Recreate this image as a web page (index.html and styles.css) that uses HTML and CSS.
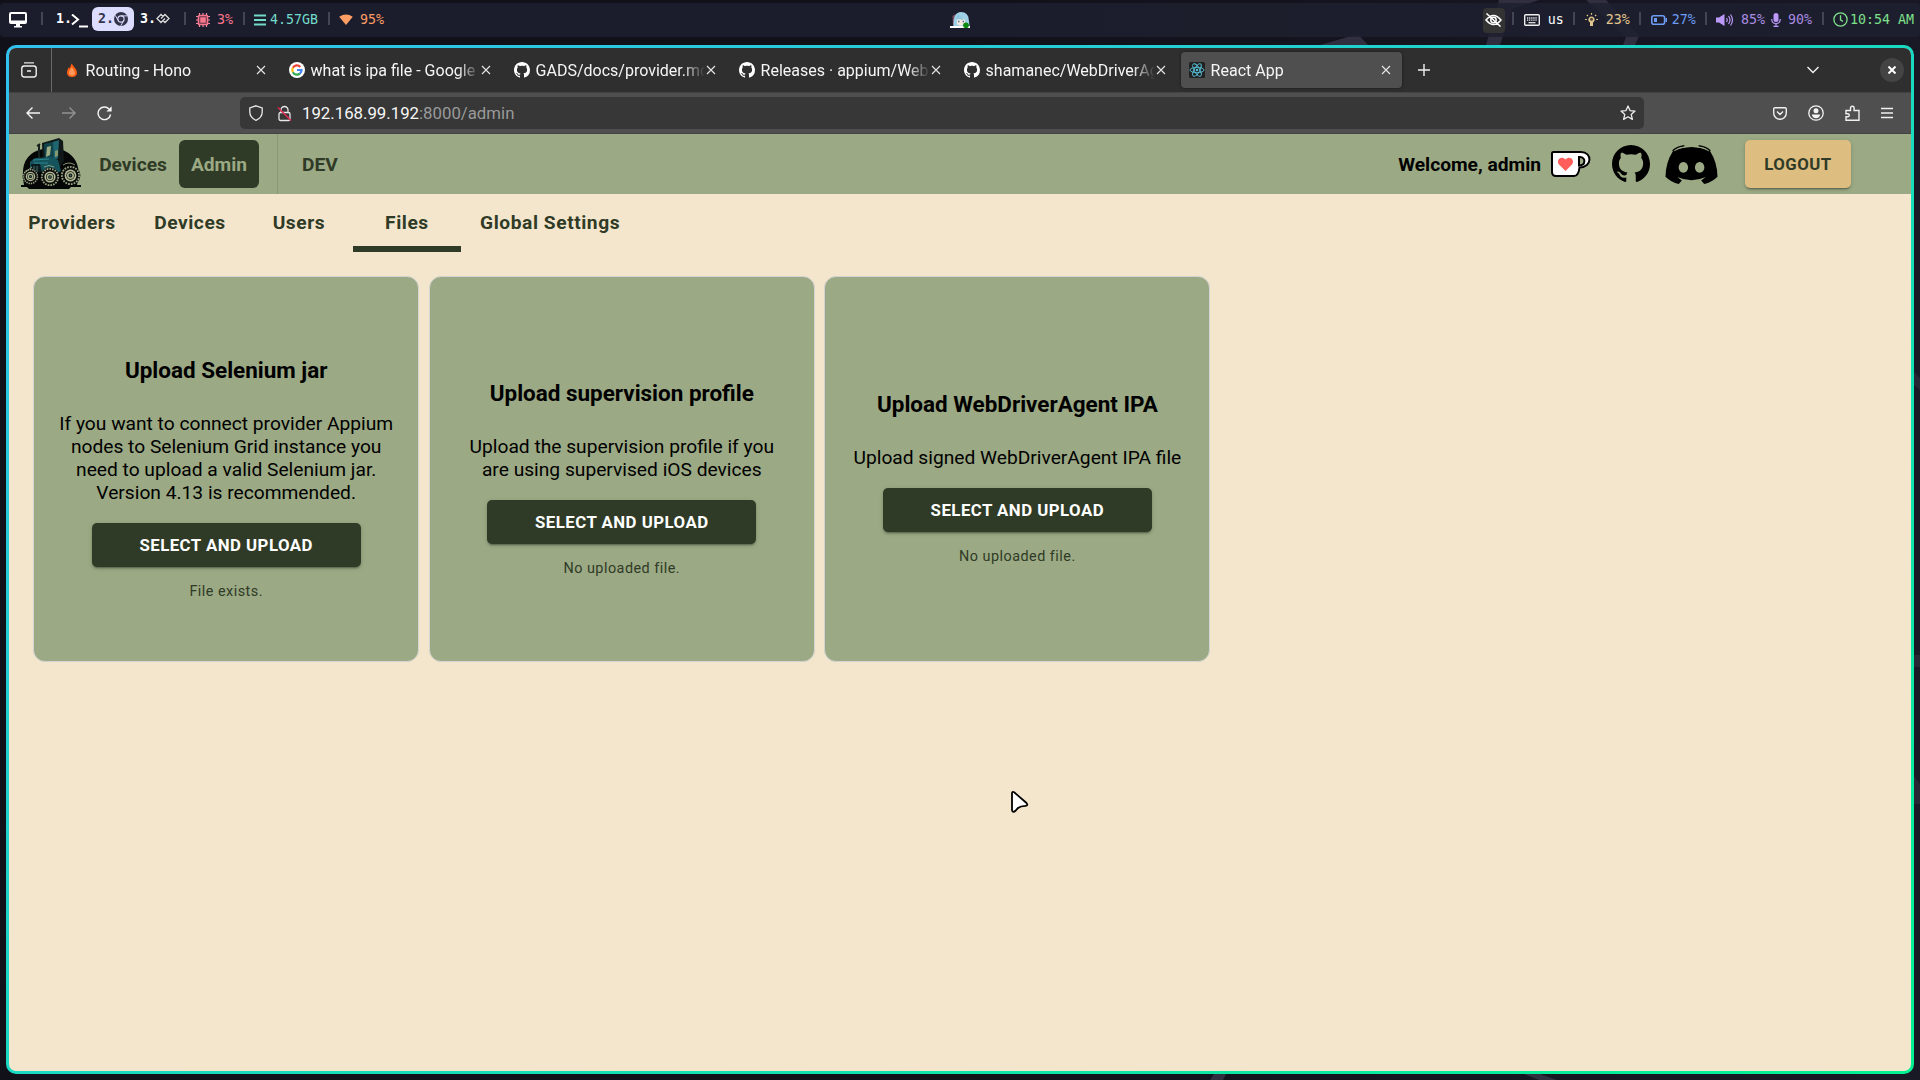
FILE: index.html
```html
<!DOCTYPE html>
<html lang="en">
<head>
<meta charset="utf-8">
<title>React App</title>
<link rel="stylesheet" href="styles.css">
</head>
<body>
<svg class="wallpaper" viewBox="0 0 1920 1080" aria-hidden="true">
  <g fill="#302f40">
    <path d="M1320 45l38-11 10 11z"/>
    <path d="M1499 0h40l-27 9-12 36h-14z"/>
    <path d="M1586 0h20l33 36-4 9h-12l3-8z"/>
    <path d="M1210 1080l4-6h12l-3 6zM1524 1074h16l17 6h-18z"/>
    <path d="M1914 372l6 6v12l-6-5zM1914 655h6v12h-6zM1914 776l6 8v20h-6z" opacity=".6"/>
  </g>
</svg>

<svg class="defs" aria-hidden="true">
  <symbol id="github" viewBox="0 0 16 16"><path d="M8 0C3.58 0 0 3.58 0 8c0 3.54 2.29 6.53 5.47 7.59.4.07.55-.17.55-.38 0-.19-.01-.82-.01-1.49-2.01.37-2.53-.49-2.69-.94-.09-.23-.48-.94-.82-1.13-.28-.15-.68-.52-.01-.53.63-.01 1.08.58 1.23.82.72 1.21 1.87.87 2.33.66.07-.52.28-.87.51-1.07-1.78-.2-3.64-.89-3.64-3.95 0-.87.31-1.59.82-2.15-.08-.2-.36-1.02.08-2.12 0 0 .67-.21 2.2.82.64-.18 1.32-.27 2-.27s1.36.09 2 .27c1.53-1.04 2.2-.82 2.2-.82.44 1.1.16 1.92.08 2.12.51.56.82 1.27.82 2.15 0 3.07-1.87 3.75-3.65 3.95.29.25.54.73.54 1.48 0 1.07-.01 1.93-.01 2.2 0 .21.15.46.55.38A8.01 8.01 0 0 0 16 8c0-4.42-3.58-8-8-8z"/></symbol>
  <symbol id="close" viewBox="0 0 10 10"><path d="M1 1l8 8M9 1l-8 8" fill="none" stroke="#e6e6e6" stroke-width="1.1"/></symbol>
  <symbol id="wheel" viewBox="-10 -10 20 20"><circle r="9.4" fill="#0b0d0a"/><circle r="8.2" fill="none" stroke="#98a386" stroke-width="1.8" stroke-dasharray="1.6 1.1"/><circle r="5.6" fill="#b4ba98"/><circle r="4" fill="#11160f"/><circle r="2.6" fill="none" stroke="#a7b18e" stroke-width="1.5"/><circle r="1" fill="#466"/></symbol>
</svg>

<header class="bar">
  <div class="bar-side">
    <svg class="i-monitor" width="18" height="16" viewBox="0 0 18 16"><path fill="#fff" fill-rule="evenodd" d="M2 0h14a2 2 0 0 1 2 2v8a2 2 0 0 1-2 2h-5v2h2v1.500H5V14h2v-2H2a2 2 0 0 1-2-2V2a2 2 0 0 1 2-2zm0 2v6.500h14V2z"/></svg>
    <i class="sep s1"></i>
    <span class="ws w1">1.<svg width="18" height="14" viewBox="0 0 18 14"><path d="M1 .5l6 5-6 5M8 12.500h9" fill="none" stroke="#fff" stroke-width="2"/></svg></span>
    <span class="ws active">2.<svg width="14" height="14" viewBox="0 0 14 14"><circle cx="7" cy="7" r="7" fill="#33334a"/><circle cx="7" cy="7" r="3.100" fill="none" stroke="#dcdcff" stroke-width="1.100"/><path d="M7 3.900h6M4.300 8.600L1.300 3.400M9.700 8.600l-3 5.200" stroke="#dcdcff" stroke-width="1"/></svg></span>
    <span class="ws w3">3.<svg width="14" height="12" viewBox="0 0 14 12"><path d="M7 3.500L5 1.500 1 5.500l4 4 4-4M7 7.500l2 2 4-4-4-4-4 4" fill="none" stroke="#ddd" stroke-width="1.300"/></svg></span>
    <i class="sep s2"></i>
    <span class="stat cpu"><svg width="14" height="14" viewBox="0 0 14 14"><path d="M3.500 0v14M7 0v14M10.500 0v14M0 3.500h14M0 7h14M0 10.500h14" stroke="#f38ba8" stroke-width="1.200"/><rect x="1.700" y="1.700" width="10.600" height="10.600" rx="1.500" fill="#f7768e"/><rect x="3.800" y="3.800" width="6.400" height="6.400" fill="#f7768e" stroke="#3a2233" stroke-width=".8"/></svg>3%</span>
    <i class="sep s3"></i>
    <span class="stat mem"><svg width="12" height="12" viewBox="0 0 12 12"><path d="M0 1.500h12M0 6h12M0 10.500h12" stroke="#73daca" stroke-width="2"/></svg>4.57GB</span>
    <i class="sep s3"></i>
    <span class="stat wifi"><svg width="14" height="11" viewBox="0 0 14 11"><path d="M.2 2.800Q7-2 13.800 2.800L7 11z" fill="#ff9e64"/></svg>95%</span>
  </div>
  <svg class="avatar" width="20" height="16" viewBox="0 0 20 16">
    <path d="M0 14h20v2H0z" fill="#fff"/><path d="M3 14L2.500 4l3-2 .5 12zM16 14l2.500-10-3-2z" fill="#7d4b62"/>
    <path d="M3.500 14Q3 0 11 0q7.500 0 8 9l.5 5z" fill="#9fd0e6"/><path d="M7 8q4-5 8 0v4q-4 3-8 0z" fill="#f6e6df"/><path d="M8 9.500h1.500M12.500 9.500H14" stroke="#467a98" stroke-width="1.500"/><path d="M6 7q1-4 3-5l1 5 1-4 2 4 2 1" fill="#8ec6dd"/>
    <circle cx="16" cy="13.300" r="2.900" fill="#0a8a10"/>
  </svg>
  <div class="bar-side right">
    <span class="eye"><svg width="17" height="14" viewBox="0 0 17 14"><path d="M1 7q7.500-9 15 0-7.500 9-15 0zM1.500.5l14 13" fill="none" stroke="#fff" stroke-width="1.500"/><circle cx="8.500" cy="7" r="2.700" fill="none" stroke="#fff" stroke-width="1.500"/></svg></span>
    <i class="sep r1"></i>
    <span class="stat kb"><svg width="16" height="12" viewBox="0 0 16 12"><rect x=".7" y=".7" width="14.600" height="10.600" rx="1" fill="none" stroke="#eee" stroke-width="1.400"/><path d="M3 4h10M3 6.200h10" stroke="#eee" stroke-width="1.300" stroke-dasharray="1.300 .8"/><path d="M4.500 8.700h7" stroke="#eee" stroke-width="1.200"/></svg>us</span>
    <i class="sep r2"></i>
    <span class="stat sun"><svg width="13" height="13" viewBox="0 0 13 13"><path d="M6.500 0v1.800M1.800 1.800L3 3M11.200 1.800L10 3M0 6.500h1.800M11.200 6.500H13" stroke="#e0c58c" stroke-width="1.200"/><path d="M5 9.500a3.200 3.200 0 1 1 3 0V13H5z" fill="#e0c58c"/><circle cx="6.500" cy="6.300" r="1.500" fill="#4b4638"/></svg>23%</span>
    <i class="sep r3"></i>
    <span class="stat bat"><svg width="16" height="10" viewBox="0 0 16 10"><rect x=".8" y=".8" width="12.800" height="8.400" rx="2" fill="none" stroke="#6c9cf5" stroke-width="1.600"/><path d="M3 3h3v4H3zM14.500 3H16v4h-1.500z" fill="#6c9cf5"/></svg>27%</span>
    <i class="sep r4"></i>
    <span class="stat vol"><svg width="18" height="14" viewBox="0 0 18 14"><path d="M0 4.500h3L8.500 1v12L3 9.500H0z" fill="#bb9af7"/><path d="M10.500 5q1.500 2 0 4M12.500 3q3 4 0 8M14.500 1.500q4 5.500 0 11" fill="none" stroke="#bb9af7" stroke-width="1.200"/></svg>85%</span>
    <span class="stat mic"><svg width="10" height="14" viewBox="0 0 10 14"><rect x="2.500" width="5" height="9" rx="2.500" fill="#bb9af7"/><path d="M.7 6q0 4.500 4.300 4.500T9.300 6M5 10.500v2.800M2.500 13.300h5" fill="none" stroke="#bb9af7" stroke-width="1.200"/></svg>90%</span>
    <i class="sep r5"></i>
    <span class="stat time"><svg width="15" height="15" viewBox="0 0 15 15"><circle cx="7.500" cy="7.500" r="6.600" fill="none" stroke="#7fe08a" stroke-width="1.300"/><path d="M7.500 3.300v4.500l2.500 1.700" fill="none" stroke="#7fe08a" stroke-width="1.300"/></svg>10:54 AM</span>
  </div>
</header>

<main class="window">
 <div class="window-body">
  <div class="tabstrip">
    <div class="recent"><svg width="16" height="16" viewBox="0 0 16 16"><path d="M3 .8h10" stroke="#e4e4e4" stroke-width="1.300"/><path d="M.8 6.500a2.500 2.500 0 0 1 2.500-2.500h9.400a2.500 2.500 0 0 1 2.500 2.500v6.200a2.300 2.300 0 0 1-2.300 2.300H3.100a2.300 2.300 0 0 1-2.300-2.300zM6 9h4" fill="none" stroke="#f0f0f0" stroke-width="1.400"/></svg></div>
    <div class="tab"><svg width="16" height="16" viewBox="0 0 16 16"><path d="M7.500 1.500C11 6 13 8 13 11c0 2.500-2.300 4-5 4s-5-1.500-5-4.300C3 8.500 4 7 4.800 5.200l1 1.200z" fill="#ff5b11"/><path d="M7.800 5C10 8 11 9.300 11 11s-1.300 2.700-3 2.700S4.900 12.600 4.900 11C4.900 9 6.300 7.500 7.800 5z" fill="#ff9758"/></svg><span>Routing - Hono</span><svg class="x"><use href="#close"/></svg></div>
    <div class="tab"><svg width="16" height="16" viewBox="0 0 16 16"><circle cx="8" cy="8" r="8" fill="#fff"/><g fill="none" stroke-width="2.200"><path d="M11.300 4.900A4.600 4.600 0 0 0 3.900 5.800" stroke="#ea4335"/><path d="M3.900 5.800a4.600 4.600 0 0 0 0 4.400" stroke="#fbbc05"/><path d="M3.900 10.200a4.600 4.600 0 0 0 7 1.400" stroke="#34a853"/><path d="M10.900 11.600A4.500 4.500 0 0 0 12.500 8H8" stroke="#4285f4"/></g></svg><span>what is ipa file - Google</span><svg class="x"><use href="#close"/></svg></div>
    <div class="tab"><svg width="16" height="16" fill="#fff"><use href="#github"/></svg><span>GADS/docs/provider.md</span><svg class="x"><use href="#close"/></svg></div>
    <div class="tab"><svg width="16" height="16" fill="#fff"><use href="#github"/></svg><span>Releases · appium/WebD</span><svg class="x"><use href="#close"/></svg></div>
    <div class="tab"><svg width="16" height="16" fill="#fff"><use href="#github"/></svg><span>shamanec/WebDriverAg</span><svg class="x"><use href="#close"/></svg></div>
    <div class="tab current"><svg width="16" height="16" viewBox="0 0 16 16"><rect width="16" height="16" rx="1.500" fill="#222"/><g fill="none" stroke="#58c4dc" stroke-width=".9"><ellipse cx="8" cy="8" rx="7" ry="2.700"/><ellipse cx="8" cy="8" rx="7" ry="2.700" transform="rotate(60 8 8)"/><ellipse cx="8" cy="8" rx="7" ry="2.700" transform="rotate(120 8 8)"/></g><circle cx="8" cy="8" r="1.200" fill="#58c4dc"/></svg><span>React App</span><svg class="x"><use href="#close"/></svg></div>
    <svg class="plus" width="12" height="12" viewBox="0 0 12 12"><path d="M6 0v12M0 6h12" stroke="#f2f2f2" stroke-width="1.400"/></svg>
    <svg class="chevron" width="12" height="8" viewBox="0 0 12 8"><path d="M.5 1L6 6.500 11.500 1" fill="none" stroke="#f2f2f2" stroke-width="1.400"/></svg>
    <div class="win-close"><svg width="8" height="8" viewBox="0 0 8 8"><path d="M.5.5l7 7M7.500.5l-7 7" stroke="#fff" stroke-width="2"/></svg></div>
  </div>

  <div class="toolbar">
    <svg class="back" width="14" height="12" viewBox="0 0 14 12"><path d="M6.500.5L1 6l5.500 5.500M1 6h13" fill="none" stroke="#f5f5f5" stroke-width="1.400"/></svg>
    <svg class="fwd" width="14" height="12" viewBox="0 0 14 12"><path d="M7.500.5L13 6l-5.500 5.500M13 6H0" fill="none" stroke="#929292" stroke-width="1.400"/></svg>
    <svg class="reload" width="15" height="15" viewBox="0 0 15 15"><path d="M12 3A6.300 6.300 0 1 0 13.600 8.500" fill="none" stroke="#f5f5f5" stroke-width="1.400"/><path d="M14.600.3v5.200H9.400z" fill="#f5f5f5"/></svg>
    <div class="urlbar">
      <svg width="14" height="16" viewBox="0 0 14 16"><path d="M7 .8L13.200 3v4c0 4-2.300 6.600-6.200 8.300C3.100 13.600.8 11 .8 7V3z" fill="none" stroke="#e8e8e8" stroke-width="1.300"/></svg>
      <svg class="lock" width="15" height="17" viewBox="0 0 15 17"><path d="M4 7.500V5a3.500 3.500 0 0 1 7 0v2.500M2 9a1.500 1.500 0 0 1 1.500-1.500h8A1.500 1.500 0 0 1 13 9v5a1.500 1.500 0 0 1-1.500 1.500h-8A1.500 1.500 0 0 1 2 14z" fill="none" stroke="#e8e8e8" stroke-width="1.300"/><path d="M1 2.500l13 13" stroke="#e22850" stroke-width="1.500"/></svg>
      <span class="url">192.168.99.192<em>:8000/admin</em></span>
      <svg class="star" width="16" height="16" viewBox="0 0 16 16"><path d="M8 1l2 4.600 5 .5-3.800 3.300 1.200 5L8 11.800 3.600 14.400l1.200-5L1 6.100l5-.5z" fill="none" stroke="#eee" stroke-width="1.300" stroke-linejoin="round"/></svg>
    </div>
    <div class="tools">
      <svg width="14" height="13" viewBox="0 0 14 13"><path d="M2 .7h10A1.300 1.300 0 0 1 13.300 2v4a6.300 6.300 0 0 1-12.600 0V2A1.300 1.300 0 0 1 2 .7zM4 4.500l3 3 3-3" fill="none" stroke="#f0f0f0" stroke-width="1.400"/></svg>
      <svg width="16" height="16" viewBox="0 0 16 16"><circle cx="8" cy="8" r="7.200" fill="none" stroke="#f5f5f5" stroke-width="1.300"/><circle cx="8" cy="5.700" r="2.500" fill="#f5f5f5"/><path d="M3.800 9.500h8.400q-.6 3.700-4.200 3.700T3.800 9.500z" fill="#f5f5f5"/></svg>
      <svg width="15" height="16" viewBox="0 0 15 16"><path d="M1 5.500h4.500V3a1.800 1.800 0 0 1 3.600 0v2.500H14v9.700H1v-3.500h1.800a1.500 1.500 0 0 0 0-3H1z" fill="none" stroke="#f0f0f0" stroke-width="1.400"/></svg>
      <svg width="12" height="12" viewBox="0 0 12 12"><path d="M0 1.500h12M0 6h12M0 10.500h12" stroke="#f0f0f0" stroke-width="1.300"/></svg>
    </div>
  </div>

  <nav class="appnav">
    <svg class="logo" width="60" height="52" viewBox="0 0 60 52">
      <path d="M0 47h3Q-3 16 22 11h17q24 8 17 36h4v2H50l-2 2H8l-2-2H0z" fill="#050706"/>
      <path d="M21 5L38 0l4 3 1 20-4 6H22z" fill="#101819"/><path d="M23 6l13-3v17l-12 1z" fill="#12444c"/><path d="M32 4l6-2-1 18-4 3z" fill="#1f6670"/><path d="M26 9l4-1-1 9-4 2z" fill="#9fae86"/><path d="M34 13l3-1v6l-3 1z" fill="#86996f"/>
      <path d="M16 8l3-2M18 7v13" stroke="#17201d" stroke-width="2"/>
      <path d="M9 24l5-4 17-1 6 3 3 11-9 5-12-5-10 1z" fill="#15545d"/><path d="M12 22l16-1M13 25h14" stroke="#2c8590" stroke-width="1"/><path d="M10 26h9l2 8-10 1z" fill="#0c1c1e"/><path d="M13 28v6M16 28v6" stroke="#47706c" stroke-width="1"/>
      <use href="#wheel" x="1" y="29" width="17" height="19"/><use href="#wheel" x="39" y="26" width="21" height="23"/><use href="#wheel" x="19" y="29" width="20" height="20"/>
      <path d="M3 35l8-6M23 29q5-3 10 0M42 27q6-4 12 0" stroke="#a9b08c" stroke-width=".8" fill="none"/>
    </svg>
    <a class="link">Devices</a><a class="link on">Admin</a>
    <i class="rule"></i>
    <a class="link dev">DEV</a>
    <span class="welcome">Welcome, admin</span>
    <svg class="kofi" width="40" height="26" viewBox="0 0 40 26"><path d="M2.500 1h27.500c11.500 0 11.500 15.500-1.500 15.500-.6 5-2 8.500-5.500 8.500H5c-2.500 0-4-1.500-4-4V2.500Q1 1 2.500 1z" fill="#fff" stroke="#000" stroke-width="2"/><path d="M28 6h1c6 0 6 8.500-1 8.500z" fill="#9ba984" stroke="#000" stroke-width="2"/><path d="M14.500 20L8 13.500C4.500 9 10.500 4 14.500 8.500c4-4.500 10 .5 6.500 5z" fill="#ff5e5b"/></svg>
    <svg class="gh" width="38" height="38"><use href="#github"/></svg>
    <svg class="discord" width="53" height="39" viewBox="0 0 52 38" preserveAspectRatio="none"><path fill-rule="evenodd" d="M8 5.500Q26-1.500 44 5.500 51.500 17 51.500 31 46 36.500 38.500 38L35.500 34.500 40 31.300Q26 37.500 12 31.300L16.500 34.500 13.500 38Q6 36.500.5 31 .5 17 8 5.500zM18 16.500a4.600 5.300 0 1 0 .01 0zM34 16.500a4.600 5.300 0 1 0 .01 0z"/><path d="M7.500 5.500Q12 1.500 19 .7M44.500 5.500Q40 1.500 33 .7" fill="none" stroke="#000" stroke-width="1.300"/><path d="M9 5.700Q14 2.400 20 1.900M43 5.700Q38 2.400 32 1.900" fill="none" stroke="#9ba984" stroke-width=".9"/></svg>
    <a class="logout">LOGOUT</a>
  </nav>

  <div class="subtabs"><a>Providers</a><a>Devices</a><a>Users</a><a class="on">Files</a><a>Global Settings</a></div>

  <section class="cards">
    <article class="card"><h3>Upload Selenium jar</h3><p>If you want to connect provider Appium<br>nodes to Selenium Grid instance you<br>need to upload a valid Selenium jar.<br>Version 4.13 is recommended.</p><a class="upload">SELECT AND UPLOAD</a><small>File exists.</small></article>
    <article class="card"><h3>Upload supervision profile</h3><p>Upload the supervision profile if you<br>are using supervised iOS devices</p><a class="upload">SELECT AND UPLOAD</a><small>No uploaded file.</small></article>
    <article class="card"><h3>Upload WebDriverAgent IPA</h3><p>Upload signed WebDriverAgent IPA file</p><a class="upload">SELECT AND UPLOAD</a><small>No uploaded file.</small></article>
  </section>
 </div>
</main>
<svg class="cursor" width="19" height="24" viewBox="0 0 19 24"><path d="M2 3.500Q2 1 4.200 2.300L16.500 13q2 2.300-1 2.800-5 .2-7.500 2.200-1 1-2.200 2.500Q2.600 23.300 2 20z" fill="#fff" stroke="#000" stroke-width="1.800"/></svg>
</body>
</html>
```
FILE: styles.css
```css
* { box-sizing: border-box; }
html, body { margin: 0; height: 100%; }
body { width: 1920px; height: 1080px; overflow: hidden; background: linear-gradient(90deg, #11111a 50%, #191926); font-family: Roboto, sans-serif; display: flex; flex-direction: column; }
svg { display: block; flex: none; }
.defs { position: absolute; width: 0; height: 0; }
.wallpaper { position: absolute; inset: 0; width: 1920px; height: 1080px; z-index: -1; }

/* desktop bar */
.bar { height: 34px; margin-top: 3px; display: flex; align-items: center; justify-content: space-between; border-radius: 4px; background: rgba(30, 32, 48, .84); font: 13.3px/24px "DejaVu Sans Mono", monospace; color: #fff; flex: none; }
.bar-side { display: flex; align-items: center; width: 900px; padding-left: 9px; height: 34px; }
.bar-side.right { justify-content: flex-end; padding: 0 6px 0 0; }
.avatar { margin-top: -1px; }
.sep { width: 2px; height: 13px; background: #444554; margin-top: -4px; }
.s1 { margin-left: 14px; }
.s2 { margin-left: 14px; }
.s3 { margin-left: 10px; }
.ws { display: flex; align-items: center; font-weight: bold; height: 24px; margin-top: -2px; white-space: pre; }
.w1 { margin-left: 13px; }
.w1 svg { margin-top: 3px; margin-left: -1px; }
.ws.active { margin-left: 3px; width: 42px; padding-left: 6px; border-radius: 6px; background: #dcdcff; color: #33334a; }
.w3 { margin-left: 6px; }
.stat { display: flex; align-items: center; white-space: pre; margin-top: -1px; }
.cpu { color: #f7768e; margin-left: 10px; gap: 7px; }
.mem { color: #73daca; margin-left: 9px; gap: 4px; }
.wifi { color: #ff9e64; margin-left: 9px; gap: 7px; }
.eye { width: 22px; height: 25px; margin-top: 0; border-radius: 4px; background: #333; display: grid; place-items: center; }
.r1 { margin-left: 7px; }
.r2, .r3, .r4, .r5 { margin-left: 10px; }
.r2 { margin-left: 9px; }
.r3, .r4 { margin-left: 9px; }
.kb { margin-left: 10px; gap: 8px; }
.sun { margin-left: 10px; gap: 8px; color: #e0c58c; }
.bat { margin-left: 10px; gap: 5px; color: #6c9cf5; }
.vol { margin-left: 9px; gap: 7px; color: #a98be0; }
.mic { margin-left: 6px; gap: 7px; color: #a98be0; }
.time { margin-left: 9px; gap: 2px; color: #7fe08a; }

/* browser window */
.window { margin: 8px 6px 6px; height: 1029px; padding: 3px; border-radius: 10px; background: linear-gradient(151deg, #31c1f0, #03f092); flex: none; }
.window-body { height: 1023px; border-radius: 7px; overflow: hidden; background: #f4e6cd; display: flex; flex-direction: column; }
.tabstrip { height: 44px; background: #2f2f2f; display: flex; align-items: center; flex: none; }
.recent { width: 43px; height: 44px; border-right: 1px solid #686868; display: flex; align-items: center; padding-left: 12px; margin-right: 4px; }
.tab { width: 221px; height: 36px; margin-right: 4px; padding: 0 11px 0 8px; display: flex; align-items: center; border-radius: 4px; color: #f5f5f5; font-size: 16px; white-space: nowrap; }
.tab span { flex: 1; margin-left: 5.6px; overflow: hidden; -webkit-mask-image: linear-gradient(90deg, #000 calc(100% - 22px), transparent); mask-image: linear-gradient(90deg, #000 calc(100% - 22px), transparent); }
.x { width: 10px; height: 10px; margin-left: 1px; }
.tab.current { background: #4f4f4f; box-shadow: 0 0 3px rgba(0, 0, 0, .5); }
.plus { margin-left: 12px; }
.chevron { margin-left: auto; }
.win-close { width: 24px; height: 24px; border-radius: 50%; background: #444; display: grid; place-items: center; margin: 0 7px 0 61px; }
.toolbar { height: 42px; background: #4f4f4f; border-top: 1px solid #434343; border-bottom: 1px solid #434343; display: flex; align-items: center; flex: none; }
.back { margin-left: 17px; }
.fwd { margin-left: 22px; }
.reload { margin-left: 21px; }
.urlbar { width: 1404px; height: 32px; margin-left: 128px; border-radius: 5px; background: #373737; display: flex; align-items: center; padding: 0 8px 0 9px; }
.lock { margin-left: 14px; }
.url { margin-left: 10px; font-size: 16.8px; color: #f6f6f6; }
.url em { font-style: normal; color: #9a9a9a; }
.star { margin-left: auto; }
.tools { display: flex; align-items: center; margin: 0 18px 0 auto; gap: 21px; }

/* application */
.appnav { height: 60px; background: #9ba984; display: flex; align-items: center; flex: none; color: #2f3b26; font-size: 19.2px; font-weight: bold; }
.logo { margin-left: 12px; }
.link { height: 48px; width: 92px; display: grid; place-items: center; margin-left: 6px; border-radius: 6px; }
.link.on { width: 80px; margin-left: 0; background: #2f3b26; color: #9ba984; }
.rule { width: 1px; height: 60px; margin-left: 18px; background: #8b9873; }
.link.dev { width: 36px; margin-left: 24px; }
.welcome { margin-left: auto; color: #000; }
.kofi { margin-left: 10px; }
.gh { margin-left: 21px; }
.discord { margin-left: 15px; }
.logout { width: 106px; height: 48px; margin: 0 60px 0 27px; border-radius: 5px; background: #ddbd80; display: grid; place-items: center; font-size: 16.8px; letter-spacing: .48px; box-shadow: 0 3px 1px -2px rgba(0,0,0,.2), 0 2px 2px rgba(0,0,0,.14), 0 1px 5px rgba(0,0,0,.12); }
.subtabs { display: flex; height: 58px; flex: none; color: #2f3b26; font-size: 19.2px; font-weight: bold; letter-spacing: .55px; }
.subtabs a { min-width: 108px; padding: 0 19.2px; display: grid; place-items: center; border-top: 4px solid transparent; border-bottom: 6px solid transparent; }
.subtabs .on { border-bottom-color: #2f3b26; }
.cards { display: flex; gap: 9.6px; margin: 24px 0 0 24.2px; }
.card { width: 386px; height: 386px; border: 1px solid #d3d3d3; border-radius: 12px; background: #9ba984; display: flex; flex-direction: column; align-items: center; justify-content: center; text-align: center; }
.card h3 { margin: 22.4px 0 29px; font-size: 22.46px; line-height: 26px; }
.card p { margin: 0 0 19px; font-size: 19.2px; line-height: 23px; }
.upload { width: 268.8px; height: 44px; border-radius: 5px; background: #2f3b26; color: #fff; display: grid; place-items: center; font-size: 16.8px; font-weight: bold; letter-spacing: .48px; box-shadow: 0 3px 1px -2px rgba(0,0,0,.2), 0 2px 2px rgba(0,0,0,.14), 0 1px 5px rgba(0,0,0,.12); }
.card small { margin-top: 13px; font-size: 14.4px; line-height: 24px; letter-spacing: .48px; color: #2f3b26; }
.cursor { position: absolute; left: 1010px; top: 790px; }
```
